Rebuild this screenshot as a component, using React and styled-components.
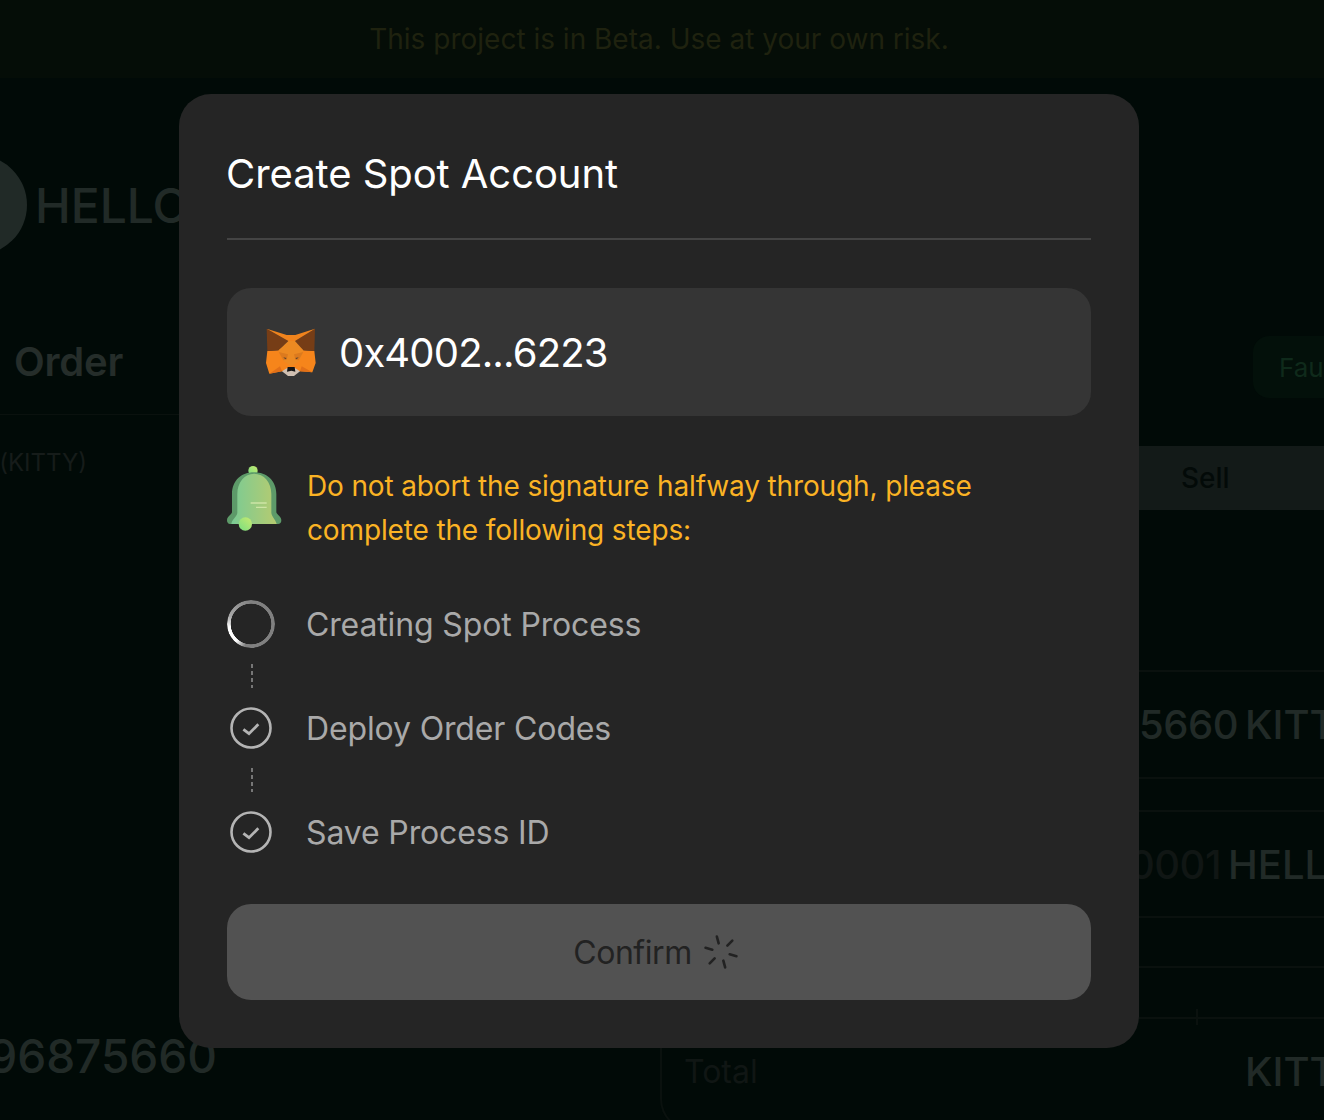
import React from "react";
import styled, { createGlobalStyle } from "styled-components";

const Global = createGlobalStyle`
  html, body { margin: 0; padding: 0; background: #010a07; }
  * { box-sizing: border-box; }
  body { font-family: Inter, "Noto Sans", sans-serif; }
`;

const Page = styled.div`
  position: relative;
  width: 1324px;
  height: 1120px;
  overflow: hidden;
  background: #010a07;
`;

const Banner = styled.div`
  height: 78px;
  padding-right: 6px;
  display: flex;
  align-items: center;
  justify-content: center;
  background: #050d07;
  color: #1f220f;
  font-size: 28px;
`;

const Main = styled.div`
  display: grid;
  grid-template-columns: 660px 800px;
  height: 1042px;
`;

const LeftColumn = styled.div`
  display: flex;
  flex-direction: column;
`;

const PairRow = styled.div`
  display: flex;
  align-items: center;
  gap: 8px;
  margin: 77px 0 0 -73px;
  color: #212a27;
  font-size: 48px;
  font-weight: 500;
`;

const PairIcon = styled.div`
  width: 100px;
  height: 100px;
  border-radius: 50%;
  background: #212a27;
`;

const OrderHeading = styled.div`
  margin-top: 79px;
  padding: 0 0 25px 14px;
  height: 81px;
  line-height: 56px;
  font-size: 40px;
  font-weight: 600;
  letter-spacing: -0.2px;
  color: #252d2a;
  border-bottom: 1px solid #0a110e;
`;

const Clipped = styled.div`
  display: flex;
  justify-content: flex-end;
  white-space: nowrap;
  width: ${(p) => p.$end}px;
  margin-top: ${(p) => p.$top}px;
  height: ${(p) => p.$h}px;
  line-height: ${(p) => p.$h}px;
  font-size: ${(p) => p.$size}px;
  font-weight: ${(p) => p.$weight || 400};
  color: ${(p) => p.$color};
`;

const RightColumn = styled.div`
  display: flex;
  flex-direction: column;
`;

const Faucet = styled.div`
  width: 160px;
  height: 62px;
  margin: 258px 0 0 593px;
  padding-left: 26px;
  display: flex;
  align-items: center;
  border-radius: 16px;
  background: #03100a;
  color: #0f2a1b;
  font-size: 26px;
`;

const SellBar = styled.div`
  height: 64px;
  margin-top: 48px;
  padding-left: 521px;
  display: flex;
  align-items: center;
  background: #131a18;
  color: #030a08;
  font-size: 28px;
  font-weight: 500;
`;

const FormRow = styled.div`
  height: ${(p) => p.$h}px;
  display: flex;
  align-items: center;
  border-bottom: 2px solid #0a110e;
  position: relative;
`;

const Amount = styled.div`
  width: ${(p) => p.$w}px;
  text-align: right;
  white-space: nowrap;
  font-size: 40px;
  font-weight: 500;
  letter-spacing: -0.5px;
  color: ${(p) => p.$color};
  overflow: hidden;
`;

const Unit = styled.div`
  margin-left: ${(p) => p.$gap}px;
  font-size: 40px;
  font-weight: 500;
  color: #212a27;
`;

const Tick = styled.span`
  position: absolute;
  left: 536px;
  bottom: -8px;
  width: 2px;
  height: 16px;
  background: #0a110e;
`;

const TotalBox = styled.div`
  height: 112px;
  padding: 0 0 8px 22px;
  display: flex;
  align-items: flex-start;
  border-left: 2px solid #0a110e;
  border-bottom: 2px solid #0a110e;
  border-bottom-left-radius: 32px;
`;

const TotalLabel = styled.div`
  width: 561px;
  margin-top: 33px;
  font-size: 32px;
  line-height: 40px;
  color: #101614;
`;

const TotalUnit = styled(Unit)`
  margin: 29px 0 0 0;
  line-height: 48px;
`;

const Modal = styled.div`
  position: absolute;
  left: 179px;
  top: 94px;
  width: 960px;
  height: 954px;
  padding: 48px;
  border-radius: 32px;
  background: #252525;
`;

const Title = styled.h2`
  margin: 0;
  height: 98px;
  padding-bottom: 32px;
  line-height: 64px;
  font-size: 40px;
  font-weight: 400;
  letter-spacing: -0.06px;
  text-indent: -1px;
  color: #fff;
  border-bottom: 2px solid #444;
`;

const WalletRow = styled.div`
  height: 128px;
  margin-top: 48px;
  padding-left: 38px;
  display: flex;
  align-items: center;
  gap: 22px;
  border-radius: 24px;
  background: #353535;
  color: #fff;
  font-size: 40px;
  letter-spacing: -0.85px;
`;

const Warning = styled.div`
  margin-top: 48px;
  display: flex;
  gap: 24px;
  color: #fbb324;
  font-size: 28px;
  letter-spacing: -0.14px;
  line-height: 44px;
`;

const BellBox = styled.svg`
  flex: none;
  width: 56px;
  height: 72px;
`;

const Steps = styled.div`
  margin-top: 48px;
`;

const Step = styled.div`
  height: 48px;
  display: flex;
  align-items: center;
  gap: 32px;
  color: #a9a9a9;
  font-size: 32px;
  letter-spacing: -0.14px;
  text-indent: -1px;
`;

const Connector = styled.div`
  width: 2px;
  height: 24px;
  margin: 16px 0 16px 24px;
  background: repeating-linear-gradient(to bottom, #777 0 4px, transparent 4px 7px);
`;

const Ring = styled.div`
  flex: none;
  width: 48px;
  height: 48px;
  border-radius: 50%;
  background: conic-gradient(#808080 0 195deg, #fff 222deg, #fff 262deg, #a8a8a8 290deg, #808080 360deg);
  -webkit-mask: radial-gradient(circle, transparent 20px, #000 20.6px);
  mask: radial-gradient(circle, transparent 20px, #000 20.6px);
`;

const CheckIcon = styled.svg`
  flex: none;
  width: 48px;
  height: 48px;
`;

const ConfirmButton = styled.button`
  width: 100%;
  height: 96px;
  margin-top: 48px;
  display: flex;
  align-items: center;
  justify-content: center;
  gap: 11px;
  border: 0;
  border-radius: 24px;
  background: #525252;
  color: #222;
  font: 400 32px Inter, sans-serif;
  letter-spacing: -0.45px;
`;

const SpinnerIcon = styled.svg`
  flex: none;
  width: 36px;
  height: 36px;
  margin-right: 6px;
`;

const Fox = () => (
  <svg width="52" height="50" viewBox="135 80 156 150" style={{ flex: "none" }}>
    <polygon points="142,152 175,150 215,120 250,150 283,152 287,188 277,216 240,213 186,213 148,220 138,188" fill="#f6851b" />
    <polygon points="140,85 205,122 176,150 142,152" fill="#763d16" />
    <polygon points="285,85 225,122 250,150 283,152" fill="#763d16" />
    <polygon points="140,85 200,104 226,104 285,85 225,122 205,122" fill="#f0831c" />
    <polygon points="205,122 225,122 250,150 238,182 215,198 190,182 176,150" fill="#ec8a22" />
    <polygon points="176,155 204,162 200,178 190,180" fill="#dc7a1e" />
    <polygon points="250,155 222,162 226,178 236,180" fill="#dc7a1e" />
    <polygon points="148,220 180,198 186,213" fill="#e27018" />
    <polygon points="277,216 245,198 240,213" fill="#e27018" />
    <polygon points="186,213 200,204 226,204 240,213 222,227 204,227" fill="#d0c0b2" />
    <polygon points="203,200 224,200 226,214 214,211 201,214" fill="#141414" />
    <polygon points="190,171 200,173 196,177" fill="#5a4230" />
    <polygon points="236,171 226,173 230,177" fill="#5a4230" />
  </svg>
);

const Bell = () => (
  <BellBox viewBox="37 25 168 216">
    <defs>
      <linearGradient id="bellFront" x1="0" x2="1" y1="0" y2="0">
        <stop offset="0" stopColor="#7acb94" />
        <stop offset="1" stopColor="#b6cb70" />
      </linearGradient>
      <linearGradient id="bellDot" x1="0" x2="1" y1="1" y2="0">
        <stop offset="0" stopColor="#78de80" />
        <stop offset="1" stopColor="#c9ea70" />
      </linearGradient>
    </defs>
    <circle cx="115" cy="45" r="14" fill="url(#bellDot)" />
    <path
      d="M52 170 V115 C52 75 80 50 118 50 C156 50 185 75 185 115 V170 C187 178 200 182 200 194 C200 202 196 205 190 205 H46 C40 205 37 200 37 194 C37 182 50 178 52 170 Z"
      fill="#5d9a69"
    />
    <path
      d="M68 172 V115 C68 80 90 54 118 54 C148 54 170 80 170 115 V172 C172 185 182 190 186 205 H50 C52 190 66 185 68 172 Z"
      fill="url(#bellFront)"
    />
    <path d="M108 142 H156 M124 155 H156" stroke="#d9ecb0" strokeWidth="4" opacity=".8" />
    <circle cx="92" cy="205" r="20" fill="url(#bellDot)" />
  </BellBox>
);

const Check = () => (
  <CheckIcon viewBox="0 0 48 48" fill="none" stroke="#b4b4b4">
    <circle cx="24" cy="24" r="19.5" strokeWidth="2.6" />
    <path d="M16.4 25.3 L22 29.7 L31.3 20.3" strokeWidth="2.8" />
  </CheckIcon>
);

const Spinner = () => (
  <SpinnerIcon viewBox="-18 -18 36 36" stroke="#222" strokeWidth="2.6" strokeLinecap="round">
    {[-105, -45, 15, 75, 135, 195].map((a) => (
      <line key={a} x1="9" y1="0" x2="16" y2="0" transform={`rotate(${a})`} />
    ))}
  </SpinnerIcon>
);

export default function App() {
  return (
    <Page>
      <Global />
      <Banner>This project is in Beta. Use at your own risk.</Banner>
      <Main>
        <LeftColumn>
          <PairRow>
            <PairIcon />
            HELLO
          </PairRow>
          <OrderHeading>Order</OrderHeading>
          <Clipped $end={87} $top={28} $h={40} $size={24} $color="#161c1a">
            Price(KITTY)
          </Clipped>
          <Clipped $end={217} $top={543} $h={60} $size={46} $weight={500} $color="#212a27">
            0.96875660
          </Clipped>
        </LeftColumn>
        <RightColumn>
          <Faucet>Faucet</Faucet>
          <SellBar>Sell</SellBar>
          <FormRow $h={162} />
          <FormRow $h={107}>
            <Amount $w={578} $color="#212a27">96875660</Amount>
            <Unit $gap={7}>KITTY</Unit>
          </FormRow>
          <FormRow $h={33} />
          <FormRow $h={106}>
            <Amount $w={561} $color="#101614">0.00000001</Amount>
            <Unit $gap={7}>HELLO</Unit>
          </FormRow>
          <FormRow $h={50} />
          <FormRow $h={51}><Tick /></FormRow>
          <TotalBox>
            <TotalLabel>Total</TotalLabel>
            <TotalUnit>KITTY</TotalUnit>
          </TotalBox>
        </RightColumn>
      </Main>
      <Modal>
        <Title>Create Spot Account</Title>
        <WalletRow>
          <Fox />
          0x4002...6223
        </WalletRow>
        <Warning>
          <Bell />
          <div>Do not abort the signature halfway through, please complete the following steps:</div>
        </Warning>
        <Steps>
          <Step><Ring />Creating Spot Process</Step>
          <Connector />
          <Step><Check />Deploy Order Codes</Step>
          <Connector />
          <Step><Check />Save Process ID</Step>
        </Steps>
        <ConfirmButton>Confirm <Spinner /></ConfirmButton>
      </Modal>
    </Page>
  );
}
